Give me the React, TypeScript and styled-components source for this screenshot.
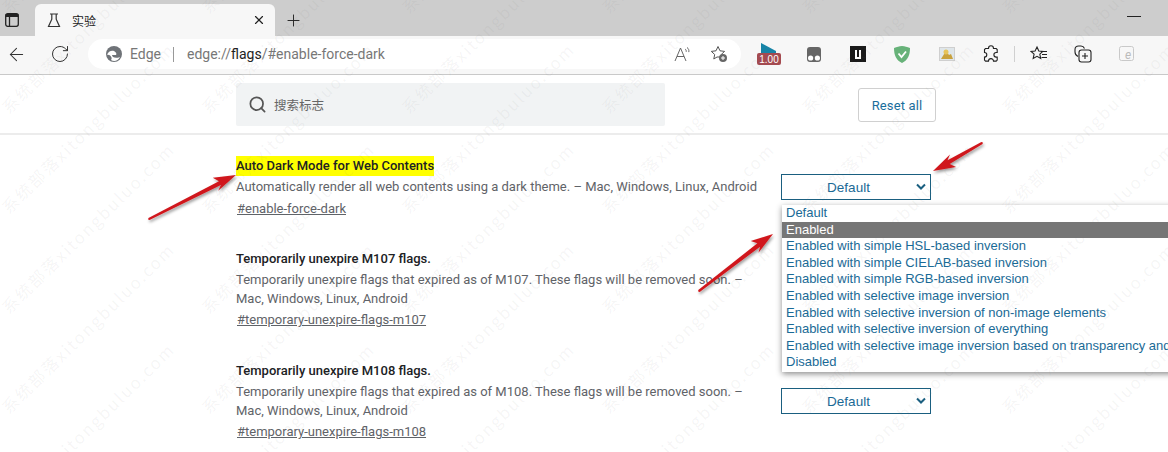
import styled, { createGlobalStyle } from 'styled-components';
import { ArrowLeft, RotateCw, Search, X, Plus } from 'lucide-react';

const GlobalStyle = createGlobalStyle`
	html, body {
		margin: 0;
		padding: 0;
		background: #fff;
		overflow: hidden;
	}
	* {
		box-sizing: border-box;
	}
`;

const Page = styled.div`
	position: relative;
	width: 1168px;
	height: 452px;
	overflow: hidden;
	font-family: Roboto, 'Noto Sans CJK SC', sans-serif;
	font-size: 13px;
	color: #5f6368;
`;

const TabStrip = styled.div`
	height: 36px;
	background: #cdcdcd;
	display: flex;
	align-items: flex-end;
`;

const TabActions = styled.div`
	width: 35px;
	height: 32px;
	display: flex;
	align-items: center;
	justify-content: center;
	padding-right: 11px;
	color: #222;
`;

const Tab = styled.div`
	width: 240px;
	height: 32px;
	background: #f7f7f7;
	border-radius: 6px 6px 0 0;
	display: flex;
	align-items: center;
	padding: 0 9px 0 12px;
	gap: 11px;
	font-size: 12px;
	color: #222;
`;

const TabTitle = styled.span`
	flex: 1;
`;

const NewTab = styled.div`
	width: 36px;
	height: 32px;
	display: flex;
	align-items: center;
	justify-content: center;
	color: #222;
`;

const Spacer = styled.div`
	flex: 1;
`;

const Minimize = styled.div`
	width: 14px;
	height: 1px;
	background: #222;
	margin: 0 27px 19px 0;
`;

const Toolbar = styled.div`
	height: 39px;
	background: #f7f7f7;
	border-bottom: 1px solid #c9c9c9;
	display: flex;
	align-items: center;
	padding-bottom: 2px;
	overflow: hidden;
`;

const BackButton = styled.div`
	flex: none;
	width: 32px;
	display: flex;
	justify-content: center;
	color: #333;
`;

const ReloadButton = styled.div`
	flex: none;
	width: 56px;
	display: flex;
	justify-content: center;
	color: #333;
`;

const AddressBar = styled.div`
	flex: none;
	width: 653px;
	height: 30px;
	background: #fff;
	border-radius: 15px;
	display: flex;
	align-items: center;
	padding: 0 4px 0 18px;
	font-size: 14px;
	color: #777;
`;

const SiteName = styled.span`
	margin-left: 8px;
`;

const Divider = styled.span`
	width: 1px;
	height: 15px;
	background: #999;
	margin: 0 13px 0 12px;
`;

const Url = styled.span`
	flex: 1;
	font-size: 14px;
`;

const UrlStrong = styled.span`
	color: #222;
`;

const PillIcon = styled.div`
	width: 36px;
	display: flex;
	justify-content: center;
	color: #666;
`;

const Extensions = styled.div`
	flex: none;
	display: flex;
	align-items: center;
	margin-left: 6px;
`;

const ExtSlot = styled.div`
	flex: none;
	width: 44.4px;
	height: 30px;
	display: flex;
	align-items: center;
	justify-content: center;
	color: #222;
`;

const ToolDivider = styled.span`
	flex: none;
	width: 1px;
	height: 16px;
	background: #d0d0d0;
	margin: 0 1px;
`;

const Avatar = styled.div`
	width: 30px;
	height: 30px;
	flex: none;
	margin-left: 20px;
	border-radius: 50%;
	background: #b8b8b8;
`;

const SearchRow = styled.div`
	height: 60px;
	border-bottom: 2px solid #ececec;
	display: flex;
	align-items: flex-start;
	padding: 8px 232px 0 236px;
`;

const SearchBox = styled.div`
	width: 429px;
	height: 43px;
	background: #f1f3f4;
	border-radius: 2px;
	display: flex;
	align-items: center;
	gap: 7px;
	padding: 0 12px;
	font-size: 12.5px;
	color: #666;
`;

const ResetButton = styled.div`
	width: 78px;
	height: 34px;
	margin: 5px 0 0 193px;
	background: #fff;
	border: 1px solid #d0d0d0;
	border-radius: 3px;
	display: flex;
	align-items: center;
	justify-content: center;
	color: #1a6e9c;
	letter-spacing: 0.15px;
`;

const FlagList = styled.div`
	padding: 21px 0 0 236px;
	display: flex;
	flex-direction: column;
	gap: 31px;
`;

const FlagRow = styled.div`
	display: grid;
	grid-template-columns: 545px 150px;
	align-items: start;
`;

const FlagText = styled.div`
	display: flex;
	flex-direction: column;
`;

const FlagTitle = styled.div<{ $marked?: boolean }>`
	font-weight: 500;
	color: #202124;
	line-height: 20px;
	height: 20px;
	width: fit-content;
	background: ${({ $marked }) => ($marked ? '#ffff00' : 'transparent')};
`;

const FlagDescription = styled.div`
	line-height: 19px;
	margin-top: 1px;
	width: 525px;
`;

const FlagLink = styled.div<{ $lower?: boolean }>`
	line-height: 20px;
	margin: ${({ $lower }) => ($lower ? '3px 0 -1px 1px' : '2px 0 0 1px')};
	text-decoration: underline;
	color: #5f6368;
`;

const FlagSelect = styled.div<{ $offset: number }>`
	height: 26px;
	margin-top: ${({ $offset }) => $offset}px;
	border: 1px solid #1a5f80;
	background: #fff;
	position: relative;
	display: flex;
	align-items: center;
	justify-content: center;
	padding-right: 15px;
	font-size: 13.5px;
	font-family: 'Liberation Sans', sans-serif;
	color: #1a6a96;
`;

const SelectChevron = styled.svg`
	position: absolute;
	right: 3px;
	top: 8px;
`;

const DropdownMenu = styled.div`
	position: absolute;
	left: 782px;
	top: 205px;
	width: 420px;
	height: 167px;
	background: #fff;
	box-shadow: 0 2px 6px rgba(0, 0, 0, 0.45);
	font-family: 'Liberation Sans', sans-serif;
	font-size: 13px;
	color: #1a6a96;
	white-space: nowrap;
`;

const DropdownItem = styled.div<{ $selected?: boolean }>`
	height: 16.6px;
	line-height: 16.6px;
	padding-left: 4px;
	background: ${({ $selected }) => ($selected ? '#767676' : 'transparent')};
	color: ${({ $selected }) => ($selected ? '#fff' : 'inherit')};
`;

const Overlay = styled.svg`
	position: absolute;
	left: 0;
	top: 0;
	pointer-events: none;
`;

const Watermarks = styled.div`
	position: absolute;
	inset: 0;
	pointer-events: none;
	overflow: hidden;
`;

const Watermark = styled.span<{ $x: number; $y: number }>`
	position: absolute;
	left: ${({ $x }) => $x}px;
	top: ${({ $y }) => $y}px;
	transform: rotate(-44.5deg);
	transform-origin: left center;
	font-family: 'Noto Sans CJK SC', sans-serif;
	font-size: 16.5px;
	line-height: 24px;
	letter-spacing: 2px;
	white-space: nowrap;
	color: rgba(120, 120, 120, 0.07);
`;

const options = [
	'Default',
	'Enabled',
	'Enabled with simple HSL-based inversion',
	'Enabled with simple CIELAB-based inversion',
	'Enabled with simple RGB-based inversion',
	'Enabled with selective image inversion',
	'Enabled with selective inversion of non-image elements',
	'Enabled with selective inversion of everything',
	'Enabled with selective image inversion based on transparency and brightness',
	'Disabled',
];

const watermarkSpots: { x: number; y: number }[] = [];
for (let col = 0; col < 6; col++) {
	for (let row = 0; row < 6; row++) {
		watermarkSpots.push({ x: col * 200 + 4, y: row * 100 - 2 });
	}
}

const Chevron = () => (
	<SelectChevron width="12" height="8" viewBox="0 0 12 8">
		<path d="M2 1.500 L6 5.500 L10 1.500" fill="none" stroke="#1a5f80" strokeWidth="2" />
	</SelectChevron>
);

const Arrow = ({ x1, y1, x2, y2 }: { x1: number; y1: number; x2: number; y2: number }) => {
	const angle = Math.atan2(y2 - y1, x2 - x1);
	const length = Math.hypot(x2 - x1, y2 - y1);
	const cos = Math.cos(angle);
	const sin = Math.sin(angle);
	const pt = (along: number, across: number) =>
		`${x2 + along * cos - across * sin},${y2 + along * sin + across * cos}`;
	return (
		<polygon
			filter="url(#arrow-shadow)"
			points={[
				pt(0, 0),
				pt(-22, -8),
				pt(-18, -2.2),
				pt(-length, -1.2),
				pt(-length - 1, 0),
				pt(-length, 1.2),
				pt(-18, 2.2),
				pt(-23, 6),
			].join(' ')}
			fill="#d0181c"
		/>
	);
};

const App = () => (
	<Page>
		<GlobalStyle />
		<TabStrip>
			<TabActions>
				<svg width="14" height="14" viewBox="0 0 14 14" fill="none" stroke="#222" strokeWidth="1.3">
					<rect x=".7" y=".7" width="12.6" height="12.6" rx="2" />
					<path d="M.7 2.500h12.6" strokeWidth="3" />
					<path d="M4.500 3v10" />
				</svg>
			</TabActions>
			<Tab>
				<svg width="14" height="15" viewBox="0 0 14 15" fill="none" stroke="#333" strokeWidth="1.2">
					<path d="M3 1h8M4.800 1v5.200L1.500 13.500h11L9.200 6.200V1" />
				</svg>
				<TabTitle>实验</TabTitle>
				<X size={14} strokeWidth={2} />
			</Tab>
			<NewTab>
				<Plus size={19} strokeWidth={1.2} />
			</NewTab>
			<Spacer />
			<Minimize />
		</TabStrip>
		<Toolbar>
			<BackButton>
				<ArrowLeft size={21} strokeWidth={1.2} />
			</BackButton>
			<ReloadButton>
				<RotateCw size={20} strokeWidth={1.2} />
			</ReloadButton>
			<AddressBar>
				<svg width="16" height="16" viewBox="0 0 16 16">
					<circle cx="8" cy="8" r="8" fill="#6f7378" />
					<path d="M1 9c1-4 5-5 7-4s3 3 2 4H6c0 2 3 4 8 2-2 4-6 5-9 3C7 12 4 8 1 9z" fill="#fff" />
				</svg>
				<SiteName>Edge</SiteName>
				<Divider />
				<Url>
					edge://<UrlStrong>flags</UrlStrong>/#enable-force-dark
				</Url>
				<PillIcon>
					<svg width="18" height="16" viewBox="0 0 18 16" fill="none" stroke="#666" strokeWidth="1">
						<path d="M1 15L6.500 2 12 15M3 10.500h7" />
						<path d="M11 3c1 .6 1.400 1.600 1.200 2.800M13 1.500c1.600 1 2.200 2.800 1.800 4.600" />
					</svg>
				</PillIcon>
				<PillIcon>
					<svg width="18" height="18" viewBox="0 0 18 18" fill="none">
						<path d="M8 1.500l2 4.300 4.600.6-3.400 3.100.6 2.500H7L3.800 14l.9-4.500L1.300 6.400l4.700-.6z" stroke="#555" strokeWidth="1" />
						<circle cx="13" cy="13" r="4" fill="#666" />
						<path d="M11 13h4M13 11v4" stroke="#fff" strokeWidth="1" />
					</svg>
				</PillIcon>
			</AddressBar>
			<Extensions>
				<ExtSlot>
					<svg width="24" height="25" viewBox="0 0 24 25">
						<path d="M4 1l15 8v5H4z" fill="#1684a7" />
						<rect y="11" width="24" height="12" rx="2" fill="#a44a50" />
						<text x="12" y="21" fontSize="10" fill="#fff" textAnchor="middle" fontFamily="Liberation Sans">1.00</text>
					</svg>
				</ExtSlot>
				<ExtSlot>
					<svg width="14" height="15" viewBox="0 0 14 15">
						<rect width="14" height="15" rx="3" fill="#666" />
						<circle cx="3.6" cy="11" r="2.6" fill="#fff" />
						<circle cx="10.4" cy="11" r="2.6" fill="#fff" />
					</svg>
				</ExtSlot>
				<ExtSlot>
					<svg width="16" height="16" viewBox="0 0 16 16">
						<rect width="16" height="16" fill="#1a1a1a" />
						<path d="M5 4h2v7h2V4h2v9H5z" fill="#fff" />
					</svg>
				</ExtSlot>
				<ExtSlot>
					<svg width="16" height="17" viewBox="0 0 16 17">
						<path d="M8 0c3 0 5 1 8 2 0 7-2 12-8 15C2 14 0 9 0 2c3-1 5-2 8-2z" fill="#67b279" />
						<path d="M4.500 7.500L7.500 11l4.500-5.500" fill="none" stroke="#fff" strokeWidth="1.8" />
					</svg>
				</ExtSlot>
				<ExtSlot>
					<svg width="16" height="14" viewBox="0 0 16 14">
						<rect width="16" height="14" fill="#cfcfcf" />
						<rect x="1" y="1" width="14" height="12" fill="#dfe6ea" />
						<path d="M2 12l5-8 3 4 2-1 2 5z" fill="#c9a13d" />
						<circle cx="7" cy="5" r="2.500" fill="#e6c35a" />
					</svg>
				</ExtSlot>
				<ExtSlot>
					<svg width="16" height="18" viewBox="0 0 16 18" fill="none" stroke="#222" strokeWidth="1.1">
						<path d="M5.500 3.500C5.500 1.500 6.800.8 8 .8s2.500.9 2.500 2.700h2.700l1 1v3h-1a2.200 2.200 0 0 0 0 4.600h1v3l-1 1h-2.700a2.500 2.500 0 0 0-5 0H2.500l-1-1v-3a2.300 2.300 0 0 0 0-4.600v-3l1-1z" />
					</svg>
				</ExtSlot>
				<ToolDivider />
				<ExtSlot>
					<svg width="18" height="18" viewBox="0 0 18 18" fill="none" stroke="#222" strokeWidth="1.1">
						<path d="M7 2l1.800 4 4 .4-3 2.800.9 4.300L7 11.300l-3.800 2.200.9-4.300-3-2.800 4-.4z" />
						<path d="M11 6.500h6M12 9.500h5M11.500 12.500h5.500" />
					</svg>
				</ExtSlot>
				<ExtSlot>
					<svg width="18" height="18" viewBox="0 0 18 18" fill="none" stroke="#222" strokeWidth="1.1">
						<path d="M4 11.500C2 10.500 1 9 1 7V4.500C1 2.500 2.500 1 4.500 1H7c1.500 0 2.800.8 3.500 2.500" />
						<rect x="5" y="5" width="12" height="12" rx="2.500" />
						<path d="M11 8v6M8 11h6" />
					</svg>
				</ExtSlot>
				<ExtSlot>
					<svg width="16" height="16" viewBox="0 0 16 16" fill="none" stroke="#c9c9c9" strokeWidth="1">
						<rect x=".5" y=".5" width="14" height="14" rx="2" />
						<text x="9" y="13" fontSize="12" fill="#bbb" stroke="none" fontStyle="italic" textAnchor="middle">e</text>
					</svg>
				</ExtSlot>
				<Avatar />
			</Extensions>
		</Toolbar>
		<SearchRow>
			<SearchBox>
				<Search size={19} strokeWidth={2.2} color="#555" />
				搜索标志
			</SearchBox>
			<ResetButton>Reset all</ResetButton>
		</SearchRow>
		<FlagList>
			<FlagRow>
				<FlagText>
					<FlagTitle $marked>Auto Dark Mode for Web Contents</FlagTitle>
					<FlagDescription>
						Automatically render all web contents using a dark theme. – Mac, Windows, Linux, Android
					</FlagDescription>
					<FlagLink $lower>#enable-force-dark</FlagLink>
				</FlagText>
				<FlagSelect $offset={18}>
					Default
					<Chevron />
				</FlagSelect>
			</FlagRow>
			<FlagRow>
				<FlagText>
					<FlagTitle>Temporarily unexpire M107 flags.</FlagTitle>
					<FlagDescription>
						Temporarily unexpire flags that expired as of M107. These flags will be removed soon. – Mac, Windows, Linux, Android
					</FlagDescription>
					<FlagLink>#temporary-unexpire-flags-m107</FlagLink>
				</FlagText>
			</FlagRow>
			<FlagRow>
				<FlagText>
					<FlagTitle>Temporarily unexpire M108 flags.</FlagTitle>
					<FlagDescription>
						Temporarily unexpire flags that expired as of M108. These flags will be removed soon. – Mac, Windows, Linux, Android
					</FlagDescription>
					<FlagLink>#temporary-unexpire-flags-m108</FlagLink>
				</FlagText>
				<FlagSelect $offset={27}>
					Default
					<Chevron />
				</FlagSelect>
			</FlagRow>
		</FlagList>
		<DropdownMenu>
			{options.map((option) => (
				<DropdownItem key={option} $selected={option === 'Enabled'}>
					{option}
				</DropdownItem>
			))}
		</DropdownMenu>
		<Overlay width="1168" height="452" viewBox="0 0 1168 452">
			<defs>
				<filter id="arrow-shadow" x="-20%" y="-20%" width="140%" height="140%">
					<feDropShadow dx="1" dy="2" stdDeviation="1.5" floodColor="#000" floodOpacity="0.4" />
				</filter>
			</defs>
			<Arrow x1={149} y1={219} x2={236} y2={175} />
			<Arrow x1={982} y1={143} x2={933} y2={171} />
			<Arrow x1={699} y1={291} x2={773} y2={234} />
		</Overlay>
		<Watermarks>
			{watermarkSpots.map((spot) => (
				<Watermark key={`${spot.x}-${spot.y}`} $x={spot.x} $y={spot.y}>
					系统部落xitongbuluo.com
				</Watermark>
			))}
		</Watermarks>
	</Page>
);

export default App;
